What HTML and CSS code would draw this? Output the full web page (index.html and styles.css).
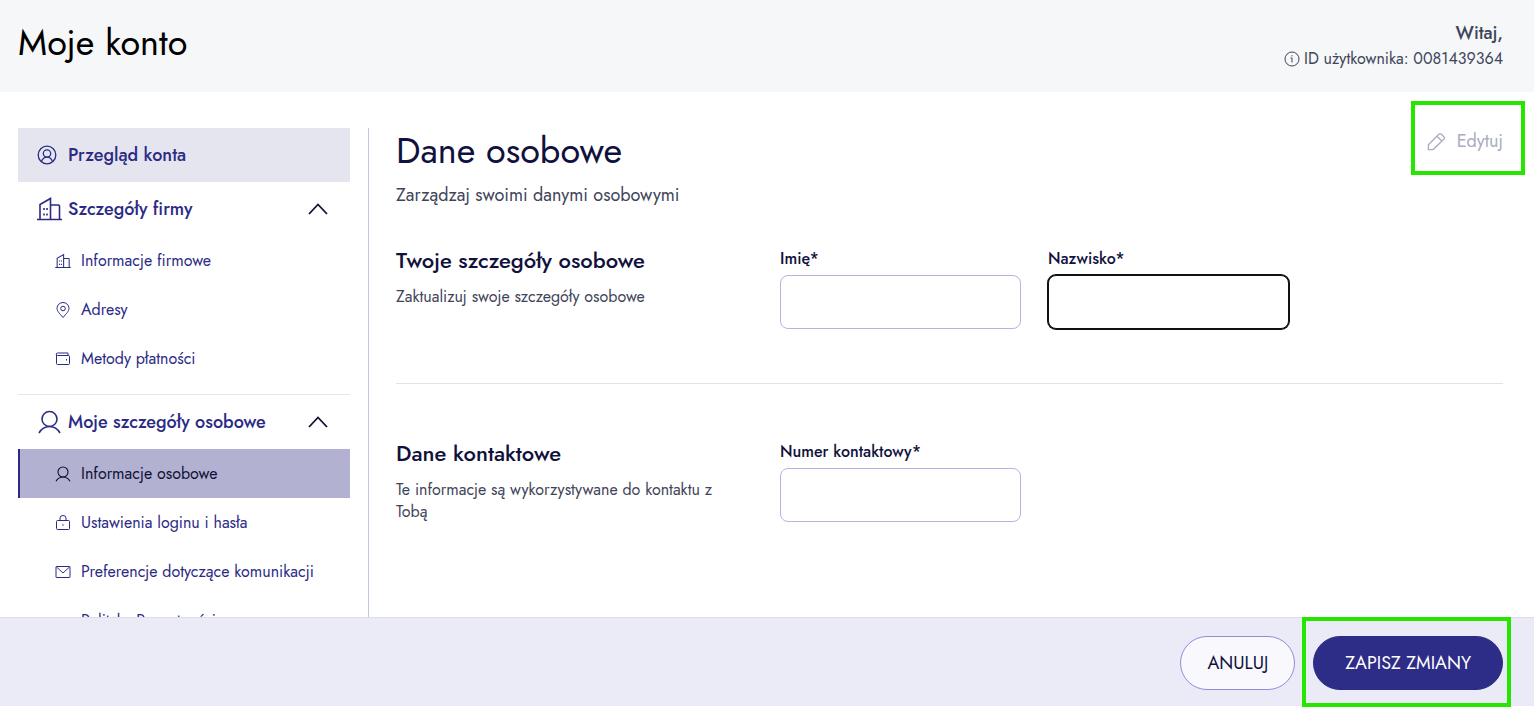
FILE: index.html
```
<!DOCTYPE html>
<html lang="pl">
<head>
<meta charset="utf-8">
<meta name="viewport" content="width=device-width, initial-scale=1">
<title>Moje konto</title>
<link rel="stylesheet" href="styles.css">
</head>
<body>
<svg class="sprite" aria-hidden="true">
  <symbol id="building" viewBox="0 0 26 24"><path d="M.5 22.500h25M3.500 22V7.500L14 1.500v20.500M14 8h8a1 1 0 0 1 1 1v13"/><path d="M7.500 11v2M10.500 11v2M7.500 16.500v2M10.500 16.500v2"/></symbol>
  <symbol id="person" viewBox="0 0 24 24"><circle cx="12" cy="9" r="7.500"/><path d="M1.500 23C4 18.500 7.500 16.500 12 16.500s8 2 10.500 6.500"/></symbol>
</svg>
<div class="page">
  <header class="topbar">
    <h1 class="topbar-title">Moje konto</h1>
    <div class="welcome">
      <p class="welcome-name">Witaj,</p>
      <p class="welcome-id">
        <svg class="info-icon" viewBox="0 0 16 16"><circle cx="8" cy="8" r="7"/><path d="M6.500 7H8v4.500M8 4.200v1.200"/></svg>
        ID użytkownika: 0081439364
      </p>
    </div>
  </header>

  <div class="content">
    <nav class="sidebar" aria-label="Konto">
      <a class="nav-head nav-overview" href="#">
        <svg class="nav-icon icon-small" viewBox="0 0 20 20"><circle cx="10" cy="10" r="8.800"/><circle cx="10" cy="8.500" r="3.700"/><path d="M4.500 16.500c1-2.800 3-4.300 5.500-4.300s4.500 1.500 5.500 4.300"/></svg>
        <span>Przegląd konta</span>
      </a>
      <section class="nav-group">
        <button class="nav-head" type="button" aria-expanded="true">
          <svg class="nav-icon"><use href="#building"/></svg>
          <span>Szczegóły firmy</span>
          <svg class="chevron" viewBox="0 0 20 12"><path d="M1 11 10 1.500 19 11"/></svg>
        </button>
        <ul class="nav-list">
          <li><a class="nav-item" href="#"><svg class="item-icon"><use href="#building"/></svg>Informacje firmowe</a></li>
          <li><a class="nav-item" href="#"><svg class="item-icon" viewBox="0 0 16 16"><path d="M8 15.500C4.500 11.500 2 9 2 6.300a6 5.800 0 0 1 12 0c0 2.700-2.500 5.200-6 9.200z"/><circle cx="8" cy="6.500" r="2.300"/></svg>Adresy</a></li>
          <li><a class="nav-item" href="#"><svg class="item-icon" viewBox="0 0 16 16"><path d="M13 4.500V2H2.500a1.200 1.200 0 0 0 0 2.500H13.500a1 1 0 0 1 1 1v7a1 1 0 0 1-1 1h-11a1 1 0 0 1-1-1V3.500M11.500 8v1.500"/></svg>Metody płatności</a></li>
        </ul>
      </section>
      <section class="nav-group">
        <button class="nav-head" type="button" aria-expanded="true">
          <svg class="nav-icon"><use href="#person"/></svg>
          <span>Moje szczegóły osobowe</span>
          <svg class="chevron" viewBox="0 0 20 12"><path d="M1 11 10 1.500 19 11"/></svg>
        </button>
        <ul class="nav-list">
          <li><a class="nav-item nav-item-active" href="#" aria-current="page"><svg class="item-icon"><use href="#person"/></svg>Informacje osobowe</a></li>
          <li><a class="nav-item" href="#"><svg class="item-icon" viewBox="0 0 16 16"><rect x="1.500" y="5.500" width="13" height="9" rx="1"/><path d="M5 5.500V3a3 2.500 0 0 1 6 0v2.500M8 9.200v1.500"/></svg>Ustawienia loginu i hasła</a></li>
          <li><a class="nav-item" href="#"><svg class="item-icon" viewBox="0 0 16 16"><rect x="1" y="2.500" width="14" height="11" rx=".5"/><path d="m1.500 3 6.500 6 6.500-6"/></svg>Preferencje dotyczące komunikacji</a></li>
          <li><a class="nav-item" href="#"><svg class="item-icon"></svg>Polityka Prywatności</a></li>
        </ul>
      </section>
    </nav>

    <main class="main">
      <div class="main-head">
        <div>
          <h2 class="main-title">Dane osobowe</h2>
          <p class="main-lead">Zarządzaj swoimi danymi osobowymi</p>
        </div>
        <button class="edit" type="button" disabled>
          <svg class="edit-icon" viewBox="0 0 20 20"><path d="M1.500 18.500v-5L12.700 2.200a1.500 1.500 0 0 1 2.200 0l3 3a1.500 1.500 0 0 1 0 2.200L6.500 18.500zM10.500 4.500l5 5"/></svg>
          Edytuj
        </button>
      </div>
      <form id="personal">
        <section class="form-row">
          <div class="form-info">
            <h3 class="form-title">Twoje szczegóły osobowe</h3>
            <p class="form-text">Zaktualizuj swoje szczegóły osobowe</p>
          </div>
          <div class="fields">
            <div class="field">
              <label for="first">Imię*</label>
              <input id="first" type="text">
            </div>
            <div class="field">
              <label for="last">Nazwisko*</label>
              <input class="input-focused" id="last" type="text">
            </div>
          </div>
        </section>
        <section class="form-row">
          <div class="form-info">
            <h3 class="form-title">Dane kontaktowe</h3>
            <p class="form-text">Te informacje są wykorzystywane do kontaktu z Tobą</p>
          </div>
          <div class="fields">
            <div class="field">
              <label for="phone">Numer kontaktowy*</label>
              <input id="phone" type="tel">
            </div>
          </div>
        </section>
      </form>
    </main>
  </div>

  <footer class="actions">
    <button class="btn btn-outline" type="button">ANULUJ</button>
    <button class="btn btn-primary" type="submit" form="personal">ZAPISZ ZMIANY</button>
  </footer>
</div>
</body>
</html>
```
FILE: styles.css
```
* { box-sizing: border-box; }
body {
  margin: 0;
  background: #fff;
  color: #3f4559;
  font-family: Jost, Lato, sans-serif;
  font-size: 16px;
  line-height: 22px;
}
h1, h2, h3, p, ul { margin: 0; padding: 0; }
h1, h2 { font-weight: 400; }
ul { list-style: none; }
a { color: inherit; text-decoration: none; }
button, input { font: inherit; }
svg { fill: none; stroke: currentColor; flex: none; }
.sprite { position: absolute; width: 0; height: 0; }

.page {
  display: flex;
  flex-direction: column;
  height: 100vh;
  padding-bottom: 2px;
}

.topbar {
  display: flex;
  justify-content: space-between;
  padding: 18px 31px 22px 18px;
  background: #f5f7f9;
}
.topbar-title { color: #000; font-size: 36px; line-height: 48px; }
.welcome { text-align: right; }
.welcome-name { font-size: 18px; font-weight: 500; line-height: 30px; }
.welcome-id { display: flex; align-items: center; justify-content: flex-end; gap: 4px; }
.info-icon { width: 16px; height: 16px; }

.content {
  flex: 1;
  min-height: 0;
  display: flex;
  padding: 36px 31px 0 18px;
  overflow: hidden;
}

.sidebar {
  flex: none;
  width: 351px;
  padding-right: 18px;
  border-right: 1px solid #c5c7dc;
  color: #2b2b85;
}
.nav-head {
  display: flex;
  align-items: center;
  gap: 5px;
  width: 100%;
  height: 54px;
  padding: 0 22px 0 18px;
  border: 0;
  background: none;
  color: inherit;
  font-size: 18px;
  font-weight: 500;
  text-align: left;
}
.nav-overview { background: #e5e5f0; }
.nav-icon { width: 27px; height: 24px; stroke-width: 1.6px; }
.icon-small { height: 20px; padding-right: 5px; stroke-width: 1.3px; }
.chevron { width: 20px; height: 12px; margin-left: auto; color: #111133; stroke-width: 1.8px; }
.nav-group + .nav-group { border-top: 1px solid #e5e5ea; }
.nav-group:not(:last-child) .nav-list { padding-bottom: 11px; }
.nav-item {
  display: flex;
  align-items: center;
  gap: 10px;
  height: 49px;
  padding-left: 35px;
  border-left: 2px solid transparent;
}
.nav-item-active { border-color: #2b2b85; background: #b2b1d2; color: #111133; }
.item-icon { width: 16px; height: 16px; }
.item-icon use { stroke-width: 1.7px; }

.main { flex: 1; min-width: 0; padding-left: 27px; }
.main-head { display: flex; justify-content: space-between; align-items: flex-start; }
.main-title { color: #11113d; font-size: 36px; line-height: 44px; }
.main-lead { margin-top: 10px; font-size: 18px; line-height: 26px; }
.edit {
  position: relative;
  display: flex;
  align-items: center;
  gap: 11px;
  padding: 0;
  border: 0;
  background: none;
  color: #a9adc1;
  font-size: 18px;
  line-height: 26px;
}
.edit-icon { width: 19px; height: 19px; stroke-width: 1.4px; }
.edit::after,
.btn-primary::after {
  content: "";
  position: absolute;
  border: 4px solid #26e600;
  pointer-events: none;
}
.edit::after { inset: -27px -22px -21px -16px; }

.form-row {
  display: grid;
  grid-template-columns: 384px 1fr;
  padding: 40px 0 54px;
}
.form-row + .form-row { padding-top: 57px; border-top: 1px solid #e2e2ec; }
.form-info { padding-right: 64px; }
.form-title { color: #11113d; font-size: 22px; font-weight: 500; line-height: 24px; }
.form-text { margin-top: 14px; }
.fields { display: flex; gap: 27px; }
.field { display: flex; flex-direction: column; gap: 5px; width: 241px; }
.field label { color: #11113d; font-weight: 500; }
.field input {
  width: 100%;
  height: 54px;
  padding: 0 16px;
  border: 1px solid #b5b3e6;
  border-radius: 8px;
  background: #fff;
  outline: 0;
}
.field .input-focused { border-color: #111; box-shadow: 0 0 0 1px #111; }

.actions {
  display: flex;
  justify-content: flex-end;
  gap: 18px;
  padding: 18px 31px 16px;
  border-top: 1px solid #dcdcef;
  background: #ebebf7;
}
.btn {
  position: relative;
  height: 54px;
  border: 1px solid #8e8cdc;
  border-radius: 27px;
  font-size: 18px;
}
.btn-outline { padding: 0 26px; background: #f8f8fd; color: #11113d; }
.btn-primary { padding: 0 31px; border-color: #2d2d87; background: #2d2d87; color: #fff; }
.btn-primary::after { inset: -20px -9px -18px -12px; }
```
